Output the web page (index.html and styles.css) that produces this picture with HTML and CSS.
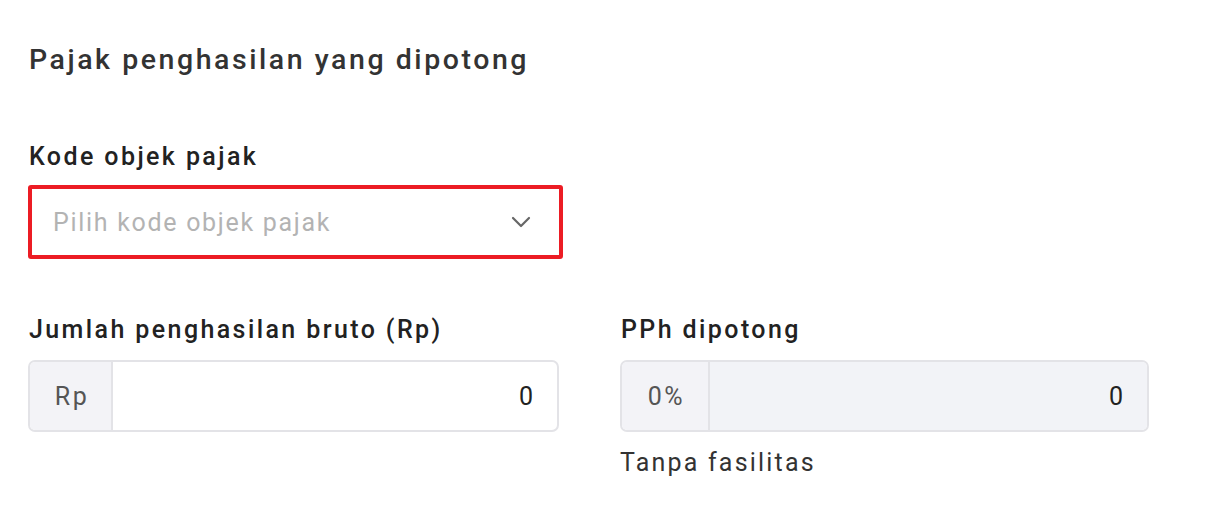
FILE: index.html
```html
<!DOCTYPE html>
<html lang="id">
<head>
<meta charset="utf-8">
<title>Pajak penghasilan yang dipotong</title>
<link rel="stylesheet" href="styles.css">
</head>
<body>
<main class="page">
  <h2 class="title">Pajak penghasilan yang dipotong</h2>

  <section class="field field-code">
    <label class="label">Kode objek pajak</label>
    <div class="select">
      <span class="placeholder">Pilih kode objek pajak</span>
      <svg class="chevron" width="20" height="12" viewBox="0 0 20 12" aria-hidden="true">
        <path d="M2 2 L10 10 L18 2" fill="none" stroke="#666" stroke-width="2.2" stroke-linecap="round" stroke-linejoin="round"/>
      </svg>
    </div>
  </section>

  <section class="row">
    <div class="field col-left">
      <label class="label">Jumlah penghasilan bruto (Rp)</label>
      <div class="input-group">
        <span class="addon">Rp</span>
        <span class="value">0</span>
      </div>
    </div>
    <div class="field col-right">
      <label class="label">PPh dipotong</label>
      <div class="input-group disabled">
        <span class="addon">0%</span>
        <span class="value">0</span>
      </div>
      <p class="hint">Tanpa fasilitas</p>
    </div>
  </section>
</main>
</body>
</html>
```
FILE: styles.css
```css
* { box-sizing: border-box; }

html, body {
  margin: 0;
  background: #ffffff;
}

body {
  font-family: Roboto, "Noto Sans", "Liberation Sans", sans-serif;
  color: #222;
}

.page {
  padding: 43px 0 0 28px;
}

.title {
  margin: 0 0 0 1px;
  font-size: 28.5px;
  line-height: 34px;
  font-weight: 500;
  color: #333;
  letter-spacing: 2.55px;
}

.field-code {
  margin-top: 66px;
  width: 535px;
}

.label {
  display: block;
  margin-left: 1px;
  font-size: 25px;
  line-height: 28px;
  font-weight: 500;
  color: #222;
  letter-spacing: 2.4px;
}

.select {
  margin-top: 14px;
  height: 74px;
  border: 4px solid #ec1c24;
  border-radius: 3px;
  display: flex;
  align-items: center;
  justify-content: space-between;
  padding: 0 28px 0 21px;
}

.placeholder {
  font-size: 25px;
  color: #b3b3b3;
  letter-spacing: 1.7px;
}

.chevron {
  display: block;
}

.row {
  margin-top: 57px;
  display: flex;
  gap: 61px;
}

.col-left { width: 531px; }
.col-right { width: 529px; }

.input-group {
  margin-top: 16px;
  height: 72px;
  border: 2px solid #e3e3e7;
  border-radius: 7px;
  display: flex;
  overflow: hidden;
  background: #fff;
}

.addon {
  width: 83px;
  background: #f3f3f7;
  border-right: 2px solid #e3e3e7;
  display: flex;
  align-items: center;
  justify-content: center;
  padding-left: 3px;
  font-size: 25px;
  color: #555;
  letter-spacing: 2.5px;
}

.value {
  flex: 1;
  display: flex;
  align-items: center;
  justify-content: flex-end;
  padding-right: 24px;
  font-size: 25px;
  color: #222;
}

.disabled .value {
  background: #f2f3f7;
}

.disabled .addon {
  width: 88px;
  background: #f3f3f7;
}

.hint {
  margin: 17px 0 0;
  font-size: 25px;
  line-height: 28px;
  color: #333;
  letter-spacing: 2.2px;
}
```
